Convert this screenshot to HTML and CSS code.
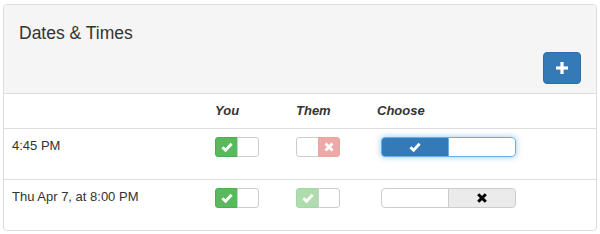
FILE: index.html
```html
<!DOCTYPE html>
<html lang="en">
<head>
<meta charset="utf-8">
<title>Dates &amp; Times</title>
<link rel="stylesheet" href="styles.css">
</head>
<body>
<div class="page">
  <div class="panel">
    <div class="panel-heading">
      <h3 class="panel-title">Dates &amp; Times</h3>
      <div class="actions">
        <button class="btn-add" type="button" aria-label="Add">
          <svg width="12" height="12" viewBox="0 0 12 12"><rect x="4.4" y="0" width="3.2" height="12" fill="#fff"/><rect x="0" y="4.4" width="12" height="3.2" fill="#fff"/></svg>
        </button>
      </div>
    </div>
    <table class="times">
      <colgroup><col class="c-date"><col class="c-you"><col class="c-them"><col class="c-choose"></colgroup>
      <thead>
        <tr><th></th><th>You</th><th>Them</th><th>Choose</th></tr>
      </thead>
      <tbody>
        <tr>
          <td>4:45 PM</td>
          <td><span class="toggle"><span class="seg green"><svg class="ico" viewBox="0 0 12 12"><polyline points="1.4,6.2 4.6,9.2 10.6,2.8" fill="none" stroke="#fff" stroke-width="2.8"/></svg></span><span class="seg"></span></span></td>
          <td><span class="toggle"><span class="seg"></span><span class="seg red-dim"><svg class="ico" viewBox="0 0 12 12"><path d="M2.5 2.5 L9.5 9.5 M9.5 2.5 L2.5 9.5" fill="none" stroke="#fff" stroke-width="2.8"/></svg></span></span></td>
          <td><span class="choose focus"><span class="cseg blue"><svg class="ico" viewBox="0 0 12 12"><polyline points="1.4,6.2 4.6,9.2 10.6,2.8" fill="none" stroke="#fff" stroke-width="2.8"/></svg></span><span class="cseg"></span></span></td>
        </tr>
        <tr>
          <td>Thu Apr 7, at 8:00 PM</td>
          <td><span class="toggle"><span class="seg green"><svg class="ico" viewBox="0 0 12 12"><polyline points="1.4,6.2 4.6,9.2 10.6,2.8" fill="none" stroke="#fff" stroke-width="2.8"/></svg></span><span class="seg"></span></span></td>
          <td><span class="toggle"><span class="seg green-dim"><svg class="ico" viewBox="0 0 12 12"><polyline points="1.4,6.2 4.6,9.2 10.6,2.8" fill="none" stroke="#fff" stroke-width="2.8"/></svg></span><span class="seg"></span></span></td>
          <td><span class="choose"><span class="cseg"></span><span class="cseg grey"><svg class="ico" viewBox="0 0 12 12"><path d="M2.2 2.2 L9.8 9.8 M9.8 2.2 L2.2 9.8" fill="none" stroke="#000" stroke-width="3"/></svg></span></span></td>
        </tr>
      </tbody>
    </table>
  </div>
</div>
</body>
</html>
```
FILE: styles.css
```css
html, body {
  margin: 0;
  padding: 0;
  background: #fff;
}
body {
  font-family: "Liberation Sans", Arial, Helvetica, sans-serif;
  font-size: 13px;
  color: #333;
}
.page {
  padding: 4px 3px 0;
}
.panel {
  box-sizing: border-box;
  width: 594px;
  border: 1px solid #ddd;
  border-radius: 4px;
  background: #fff;
  overflow: hidden;
}
.panel-heading {
  background: #f5f5f5;
  border-bottom: 1px solid #ddd;
  padding: 10px 15px 9px;
  display: flex;
  flex-direction: column;
}
.panel-title {
  margin: 9px 0 0;
  font-size: 17.5px;
  line-height: 19px;
  font-weight: normal;
  color: #333;
}
.actions {
  display: flex;
  justify-content: flex-end;
  margin-top: 9px;
}
.btn-add {
  width: 38px;
  height: 32px;
  margin: 0;
  padding: 0;
  border: 1px solid #2e6da4;
  border-radius: 4px;
  background: #337ab7;
  display: flex;
  align-items: center;
  justify-content: center;
}
.times {
  width: 100%;
  border-collapse: collapse;
}
.c-date { width: 203px; }
.c-you { width: 81px; }
.c-them { width: 81px; }
.times th {
  text-align: left;
  font-weight: bold;
  font-style: italic;
  padding: 8px;
  line-height: 18px;
  height: 18px;
  color: #333;
}
.times td {
  border-top: 1px solid #ddd;
  padding: 8px;
  line-height: 18px;
  height: 34px;
  vertical-align: top;
  box-sizing: content-box;
}
.toggle {
  display: flex;
  width: 44px;
  height: 20px;
}
.seg {
  box-sizing: border-box;
  width: 22px;
  height: 20px;
  border: 1px solid #ccc;
  background: #fff;
  display: flex;
  align-items: center;
  justify-content: center;
}
.seg:first-child {
  width: 23px;
  border-radius: 3px 0 0 3px;
}
.seg + .seg {
  margin-left: -1px;
  border-radius: 0 3px 3px 0;
}
.seg.green {
  background: #5cb85c;
  border-color: #4cae4c;
}
.seg.green-dim {
  background: #aedcae;
  border-color: #a5d7a5;
}
.seg.red-dim {
  background: #eca9a7;
  border-color: #e8a4a1;
}
.ico {
  width: 12px;
  height: 12px;
  display: block;
}
.choose {
  display: flex;
  width: 135px;
  height: 20px;
  margin-left: 4px;
  border-radius: 4px;
}
.choose.focus {
  box-shadow: 0 0 6px rgba(102, 175, 233, 0.7);
}
.cseg {
  box-sizing: border-box;
  width: 68px;
  height: 20px;
  border: 1px solid #ccc;
  background: #fff;
  display: flex;
  align-items: center;
  justify-content: center;
}
.cseg:first-child {
  border-radius: 4px 0 0 4px;
}
.cseg + .cseg {
  margin-left: -1px;
  border-radius: 0 4px 4px 0;
}
.choose.focus .cseg {
  border-color: #66afe9;
}
.cseg.blue {
  background: #337ab7;
}
.cseg.grey {
  background: #ebebeb;
  border-color: #ccc;
}
```
